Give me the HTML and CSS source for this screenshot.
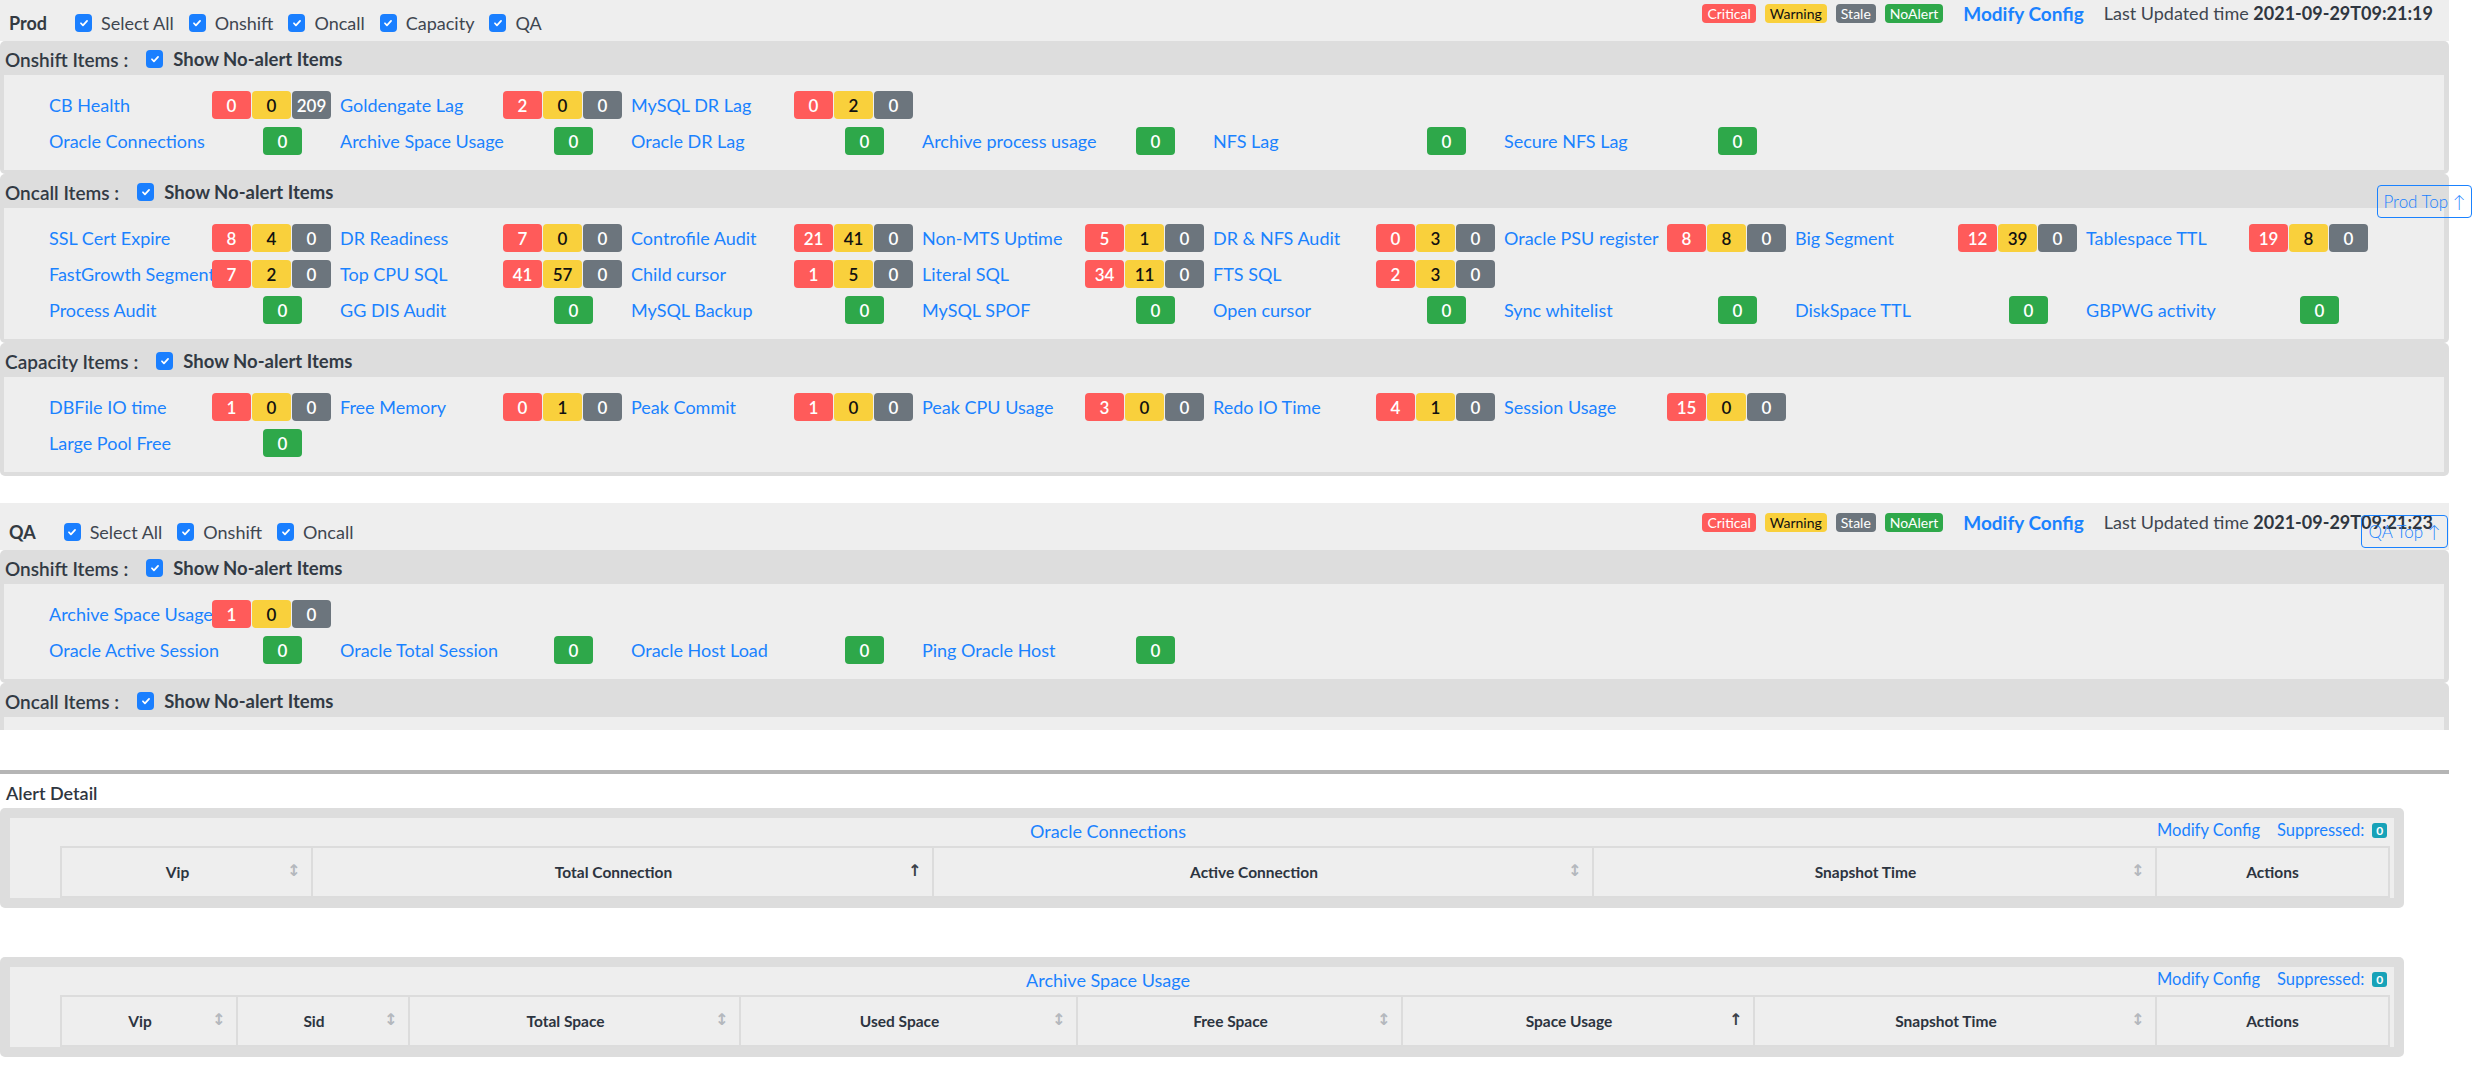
FILE: index.html
```html
<!DOCTYPE html>
<html>
<head>
<meta charset="utf-8">
<link rel="stylesheet" href="styles.css">
</head>
<body>
<div class="envbox prod">
  <div class="env-header">
    <div class="env-left">
      <span class="env-title">Prod</span>
      <label class="cbx"><span class="cb"><svg viewBox="0 0 16 16"><path d="M4.5 8.3l2.3 2.4 4.7-5.2"/></svg></span>Select All</label>
      <label class="cbx"><span class="cb"><svg viewBox="0 0 16 16"><path d="M4.5 8.3l2.3 2.4 4.7-5.2"/></svg></span>Onshift</label>
      <label class="cbx"><span class="cb"><svg viewBox="0 0 16 16"><path d="M4.5 8.3l2.3 2.4 4.7-5.2"/></svg></span>Oncall</label>
      <label class="cbx"><span class="cb"><svg viewBox="0 0 16 16"><path d="M4.5 8.3l2.3 2.4 4.7-5.2"/></svg></span>Capacity</label>
      <label class="cbx"><span class="cb"><svg viewBox="0 0 16 16"><path d="M4.5 8.3l2.3 2.4 4.7-5.2"/></svg></span>QA</label>
    </div>
    <div class="env-right">
      <span class="lg red">Critical</span>
      <span class="lg yellow">Warning</span>
      <span class="lg gray">Stale</span>
      <span class="lg green">NoAlert</span>
      <a class="modify">Modify Config</a>
      <span class="updated">Last Updated time <b>2021-09-29T09:21:19</b></span>
    </div>
  </div>

  <div class="group">
    <div class="group-head"><span class="gh-title">Onshift Items :</span><span class="cb"><svg viewBox="0 0 16 16"><path d="M4.5 8.3l2.3 2.4 4.7-5.2"/></svg></span><span class="gh-show">Show No-alert Items</span></div>
    <div class="panel">
      <div class="grid">
        <div class="item"><span class="label">CB Health</span><span class="badges"><span class="b red">0</span><span class="b yellow">0</span><span class="b gray">209</span></span></div>
        <div class="item"><span class="label">Goldengate Lag</span><span class="badges"><span class="b red">2</span><span class="b yellow">0</span><span class="b gray">0</span></span></div>
        <div class="item"><span class="label">MySQL DR Lag</span><span class="badges"><span class="b red">0</span><span class="b yellow">2</span><span class="b gray">0</span></span></div>
      </div>
      <div class="grid">
        <div class="item"><span class="label">Oracle Connections</span><span class="b green">0</span></div>
        <div class="item"><span class="label">Archive Space Usage</span><span class="b green">0</span></div>
        <div class="item"><span class="label">Oracle DR Lag</span><span class="b green">0</span></div>
        <div class="item"><span class="label">Archive process usage</span><span class="b green">0</span></div>
        <div class="item"><span class="label">NFS Lag</span><span class="b green">0</span></div>
        <div class="item"><span class="label">Secure NFS Lag</span><span class="b green">0</span></div>
      </div>
    </div>
  </div>

  <div class="group">
    <div class="group-head"><span class="gh-title">Oncall Items :</span><span class="cb"><svg viewBox="0 0 16 16"><path d="M4.5 8.3l2.3 2.4 4.7-5.2"/></svg></span><span class="gh-show">Show No-alert Items</span></div>
    <div class="panel">
      <div class="grid">
        <div class="item"><span class="label">SSL Cert Expire</span><span class="badges"><span class="b red">8</span><span class="b yellow">4</span><span class="b gray">0</span></span></div>
        <div class="item"><span class="label">DR Readiness</span><span class="badges"><span class="b red">7</span><span class="b yellow">0</span><span class="b gray">0</span></span></div>
        <div class="item"><span class="label">Controfile Audit</span><span class="badges"><span class="b red">21</span><span class="b yellow">41</span><span class="b gray">0</span></span></div>
        <div class="item"><span class="label">Non-MTS Uptime</span><span class="badges"><span class="b red">5</span><span class="b yellow">1</span><span class="b gray">0</span></span></div>
        <div class="item"><span class="label">DR &amp; NFS Audit</span><span class="badges"><span class="b red">0</span><span class="b yellow">3</span><span class="b gray">0</span></span></div>
        <div class="item"><span class="label">Oracle PSU register</span><span class="badges"><span class="b red">8</span><span class="b yellow">8</span><span class="b gray">0</span></span></div>
        <div class="item"><span class="label">Big Segment</span><span class="badges"><span class="b red">12</span><span class="b yellow">39</span><span class="b gray">0</span></span></div>
        <div class="item"><span class="label">Tablespace TTL</span><span class="badges"><span class="b red">19</span><span class="b yellow">8</span><span class="b gray">0</span></span></div>
        <div class="item"><span class="label">FastGrowth Segment</span><span class="badges"><span class="b red">7</span><span class="b yellow">2</span><span class="b gray">0</span></span></div>
        <div class="item"><span class="label">Top CPU SQL</span><span class="badges"><span class="b red">41</span><span class="b yellow">57</span><span class="b gray">0</span></span></div>
        <div class="item"><span class="label">Child cursor</span><span class="badges"><span class="b red">1</span><span class="b yellow">5</span><span class="b gray">0</span></span></div>
        <div class="item"><span class="label">Literal SQL</span><span class="badges"><span class="b red">34</span><span class="b yellow">11</span><span class="b gray">0</span></span></div>
        <div class="item"><span class="label">FTS SQL</span><span class="badges"><span class="b red">2</span><span class="b yellow">3</span><span class="b gray">0</span></span></div>
      </div>
      <div class="grid">
        <div class="item"><span class="label">Process Audit</span><span class="b green">0</span></div>
        <div class="item"><span class="label">GG DIS Audit</span><span class="b green">0</span></div>
        <div class="item"><span class="label">MySQL Backup</span><span class="b green">0</span></div>
        <div class="item"><span class="label">MySQL SPOF</span><span class="b green">0</span></div>
        <div class="item"><span class="label">Open cursor</span><span class="b green">0</span></div>
        <div class="item"><span class="label">Sync whitelist</span><span class="b green">0</span></div>
        <div class="item"><span class="label">DiskSpace TTL</span><span class="b green">0</span></div>
        <div class="item"><span class="label">GBPWG activity</span><span class="b green">0</span></div>
      </div>
    </div>
  </div>

  <div class="group">
    <div class="group-head"><span class="gh-title">Capacity Items :</span><span class="cb"><svg viewBox="0 0 16 16"><path d="M4.5 8.3l2.3 2.4 4.7-5.2"/></svg></span><span class="gh-show">Show No-alert Items</span></div>
    <div class="panel">
      <div class="grid">
        <div class="item"><span class="label">DBFile IO time</span><span class="badges"><span class="b red">1</span><span class="b yellow">0</span><span class="b gray">0</span></span></div>
        <div class="item"><span class="label">Free Memory</span><span class="badges"><span class="b red">0</span><span class="b yellow">1</span><span class="b gray">0</span></span></div>
        <div class="item"><span class="label">Peak Commit</span><span class="badges"><span class="b red">1</span><span class="b yellow">0</span><span class="b gray">0</span></span></div>
        <div class="item"><span class="label">Peak CPU Usage</span><span class="badges"><span class="b red">3</span><span class="b yellow">0</span><span class="b gray">0</span></span></div>
        <div class="item"><span class="label">Redo IO Time</span><span class="badges"><span class="b red">4</span><span class="b yellow">1</span><span class="b gray">0</span></span></div>
        <div class="item"><span class="label">Session Usage</span><span class="badges"><span class="b red">15</span><span class="b yellow">0</span><span class="b gray">0</span></span></div>
      </div>
      <div class="grid">
        <div class="item"><span class="label">Large Pool Free</span><span class="b green">0</span></div>
      </div>
    </div>
  </div>
</div>

<div class="envbox qa">
  <div class="env-header">
    <div class="env-left">
      <span class="env-title">QA</span>
      <label class="cbx"><span class="cb"><svg viewBox="0 0 16 16"><path d="M4.5 8.3l2.3 2.4 4.7-5.2"/></svg></span>Select All</label>
      <label class="cbx"><span class="cb"><svg viewBox="0 0 16 16"><path d="M4.5 8.3l2.3 2.4 4.7-5.2"/></svg></span>Onshift</label>
      <label class="cbx"><span class="cb"><svg viewBox="0 0 16 16"><path d="M4.5 8.3l2.3 2.4 4.7-5.2"/></svg></span>Oncall</label>
    </div>
    <div class="env-right">
      <span class="lg red">Critical</span>
      <span class="lg yellow">Warning</span>
      <span class="lg gray">Stale</span>
      <span class="lg green">NoAlert</span>
      <a class="modify">Modify Config</a>
      <span class="updated">Last Updated time <b>2021-09-29T09:21:23</b></span>
    </div>
  </div>

  <div class="group">
    <div class="group-head"><span class="gh-title">Onshift Items :</span><span class="cb"><svg viewBox="0 0 16 16"><path d="M4.5 8.3l2.3 2.4 4.7-5.2"/></svg></span><span class="gh-show">Show No-alert Items</span></div>
    <div class="panel">
      <div class="grid">
        <div class="item"><span class="label">Archive Space Usage</span><span class="badges"><span class="b red">1</span><span class="b yellow">0</span><span class="b gray">0</span></span></div>
      </div>
      <div class="grid">
        <div class="item"><span class="label">Oracle Active Session</span><span class="b green">0</span></div>
        <div class="item"><span class="label">Oracle Total Session</span><span class="b green">0</span></div>
        <div class="item"><span class="label">Oracle Host Load</span><span class="b green">0</span></div>
        <div class="item"><span class="label">Ping Oracle Host</span><span class="b green">0</span></div>
      </div>
    </div>
  </div>

  <div class="group">
    <div class="group-head"><span class="gh-title">Oncall Items :</span><span class="cb"><svg viewBox="0 0 16 16"><path d="M4.5 8.3l2.3 2.4 4.7-5.2"/></svg></span><span class="gh-show">Show No-alert Items</span></div>
    <div class="panel empty"></div>
  </div>
</div>

<a class="top-btn prod-top">Prod Top ↑</a>
<a class="top-btn qa-top">QA Top ↑</a>

<div class="separator"></div>
<div class="detail-title">Alert Detail</div>

<div class="detail">
  <div class="detail-inner">
    <div class="dt-row">
      <a class="dt-title">Oracle Connections</a>
      <div class="dt-right"><a class="dt-modify">Modify Config</a><span class="dt-sup">Suppressed:</span><span class="sup-badge">0</span></div>
    </div>
    <table class="dtable">
      <colgroup><col style="width:251px"><col style="width:621px"><col style="width:660px"><col style="width:563px"><col style="width:233px"></colgroup>
      <thead><tr>
        <th class="sortable">Vip<span class="sort both"></span></th>
        <th class="sortable">Total Connection<span class="sort up"></span></th>
        <th class="sortable">Active Connection<span class="sort both"></span></th>
        <th class="sortable">Snapshot Time<span class="sort both"></span></th>
        <th>Actions</th>
      </tr></thead>
    </table>
  </div>
</div>

<div class="detail second">
  <div class="detail-inner">
    <div class="dt-row">
      <a class="dt-title">Archive Space Usage</a>
      <div class="dt-right"><a class="dt-modify">Modify Config</a><span class="dt-sup">Suppressed:</span><span class="sup-badge">0</span></div>
    </div>
    <table class="dtable">
      <colgroup><col style="width:176px"><col style="width:172px"><col style="width:331px"><col style="width:337px"><col style="width:325px"><col style="width:352px"><col style="width:402px"><col style="width:233px"></colgroup>
      <thead><tr>
        <th class="sortable">Vip<span class="sort both"></span></th>
        <th class="sortable">Sid<span class="sort both"></span></th>
        <th class="sortable">Total Space<span class="sort both"></span></th>
        <th class="sortable">Used Space<span class="sort both"></span></th>
        <th class="sortable">Free Space<span class="sort both"></span></th>
        <th class="sortable">Space Usage<span class="sort up"></span></th>
        <th class="sortable">Snapshot Time<span class="sort both"></span></th>
        <th>Actions</th>
      </tr></thead>
    </table>
  </div>
</div>
</body>
</html>
```

FILE: styles.css
```css
html, body {
  margin: 0;
  padding: 0;
  background: #fff;
}
body {
  font-family: Lato, "Open Sans", "Liberation Sans", sans-serif;
  font-size: 18px;
  color: #343a40;
  position: relative;
  width: 2476px;
  min-height: 1089px;
  overflow: hidden;
}
a { color: #1a82ff; text-decoration: none; }

.envbox { width: 2449px; overflow: hidden; }
.envbox.prod { margin-top: -6px; }
.envbox.qa { margin-top: 27px; height: 227px; }

.env-header {
  height: 47px;
  background: #eeeeee;
  display: flex;
  justify-content: space-between;
  align-items: flex-start;
}
.env-left {
  display: flex;
  align-items: center;
  height: 18px;
  margin-top: 20px;
  padding-left: 9px;
  line-height: 18px;
}
.env-title { font-weight: 700; color: #333a42; margin-right: 28px; }
.cbx { display: flex; align-items: center; margin-right: 15px; color: #3f4650; }
.cbx .cb { margin-right: 9px; }

.cb {
  width: 17px;
  height: 18px;
  border-radius: 4px;
  background: #1a7fff;
  display: inline-flex;
  align-items: center;
  justify-content: center;
  flex: none;
}
.cb svg { width: 14px; height: 14px; }
.cb path { fill: none; stroke: #fff; stroke-width: 2; stroke-linecap: round; stroke-linejoin: round; }

.env-right {
  display: flex;
  align-items: center;
  height: 20px;
  margin-top: 9px;
  padding-right: 16px;
  white-space: nowrap;
}
.lg {
  font-size: 14px;
  height: 19px;
  line-height: 19px;
  padding: 0 5px;
  border-radius: 4px;
  margin-right: 9px;
  color: #fff;
}
.lg.yellow { color: #111; }
.modify { font-weight: 700; font-size: 19px; margin-left: 11px; margin-right: 20px; color: #1a82ff; }
.updated { color: #3f4650; }
.updated b { color: #2f3640; font-weight: 700; }

.red { background: #ff5b5a; }
.yellow { background: #f9d03c; }
.gray { background: #6c757d; }
.green { background: #2ea84a; }

.group {
  background: #dddddd;
  border-radius: 5px;
  padding: 0 5px 4px 4px;
}
.group-head {
  height: 34px;
  display: flex;
  align-items: center;
  padding-left: 1px;
  padding-top: 2px;
  box-sizing: border-box;
  color: #323a44;
}
.gh-title { font-weight: 600; font-size: 19px; margin-right: 18px; }
.gh-show { font-weight: 700; font-size: 18.5px; margin-left: 10px; }

.panel {
  background: #eeeeee;
  padding: 16px 0 15px 45px;
  display: flex;
  flex-direction: column;
  gap: 8px;
}
.panel.empty { height: 100px; }
.grid {
  display: grid;
  grid-template-columns: repeat(8, 291px);
  row-gap: 8px;
}
.item { display: flex; align-items: center; height: 28px; }
.label {
  width: 163px;
  flex: none;
  white-space: nowrap;
  color: #1a82ff;
  font-size: 18px;
}
.badges { display: flex; gap: 1px; }
.b {
  width: 39px;
  height: 28px;
  border-radius: 4px;
  display: flex;
  align-items: center;
  justify-content: center;
  color: #fff;
  font-size: 17px;
  font-weight: 600;
  flex: none;
}
.b.yellow { color: #111; }
.b.green { margin-left: 51px; }

.top-btn {
  position: absolute;
  height: 33px;
  box-sizing: border-box;
  border: 1px solid #1a82ff;
  border-radius: 4px;
  color: #1a82ff;
  font-size: 17px;
  font-weight: 300;
  display: flex;
  align-items: center;
  justify-content: center;
}
.prod-top { top: 185px; left: 2377px; width: 95px; }
.qa-top { top: 515px; left: 2361px; width: 87px; }

.separator {
  margin-top: 40px;
  width: 2449px;
  height: 4px;
  background: #b5b5b5;
}
.detail-title {
  margin-top: 9px;
  padding-left: 6px;
  height: 20px;
  line-height: 20px;
  font-size: 18px;
  font-weight: 600;
  color: #2f3640;
}

.detail {
  margin-top: 5px;
  width: 2404px;
  box-sizing: border-box;
  background: #dddddd;
  border-radius: 5px;
  padding: 10px;
}
.detail.second { margin-top: 49px; }
.detail-inner {
  background: #eeeeee;
  padding-left: 50px;
  padding-right: 6px;
}
.dt-row {
  height: 28px;
  display: grid;
  align-items: center;
}
.dt-title {
  grid-area: 1 / 1;
  justify-self: start;
  margin-left: 958px;
  width: 180px;
  text-align: center;
  font-size: 18px;
  white-space: nowrap;
  margin-top: -2px;
}
.dt-right {
  grid-area: 1 / 1;
  justify-self: start;
  margin-left: 2097px;
  display: flex;
  align-items: center;
  font-size: 16.5px;
  white-space: nowrap;
  margin-top: -4px;
}
.dt-modify { color: #1a82ff; margin-right: 17px; }
.dt-sup { color: #1a82ff; margin-right: 8px; }
.sup-badge {
  background: #17a2b8;
  color: #fff;
  font-size: 12px;
  font-weight: 700;
  border-radius: 3px;
  padding: 0 4px;
  height: 15px;
  line-height: 15px;
}

.dtable {
  border-collapse: collapse;
  table-layout: fixed;
  width: 2328px;
}
.dtable th {
  height: 48px;
  border: 2px solid #dcdcdc;
  font-size: 15.5px;
  font-weight: 700;
  color: #2c3440;
  text-align: center;
  padding: 0;
  position: relative;
}
.dtable th.sortable { padding-right: 18px; }
.sort {
  position: absolute;
  right: 15px;
  top: 50%;
  width: 8px;
  height: 16px;
  margin-top: -8px;
}
.sort.both::after {
  content: "↕";
  position: absolute;
  left: -1px;
  top: -3px;
  font-size: 16px;
  line-height: 20px;
  color: #b4b8bd;
  font-family: "DejaVu Sans", sans-serif;
}
.sort.up::after {
  content: "↑";
  position: absolute;
  left: -1px;
  top: -3px;
  font-size: 16px;
  line-height: 20px;
  color: #3a4048;
  font-family: "DejaVu Sans", sans-serif;
}
```
